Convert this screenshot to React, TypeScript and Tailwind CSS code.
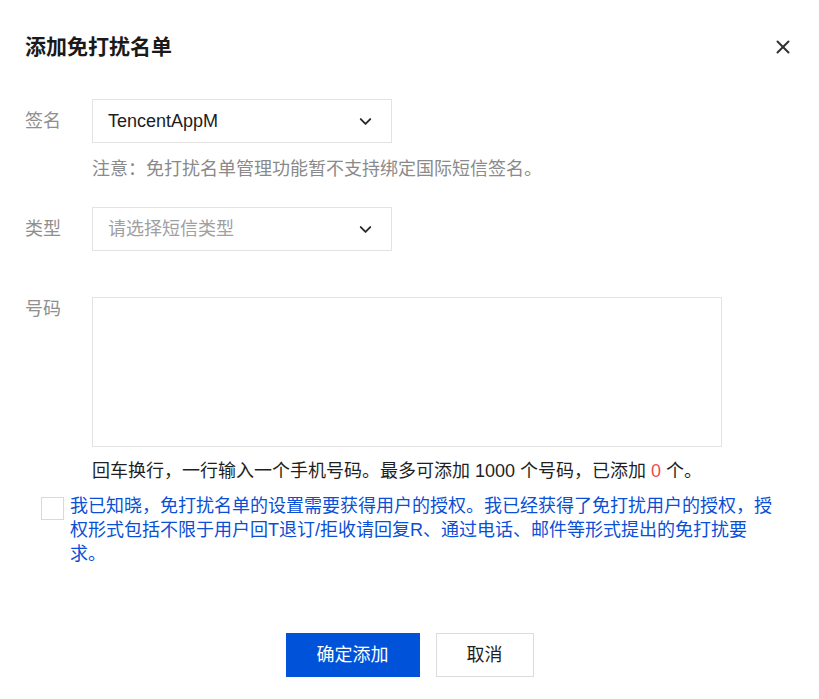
import { X, ChevronDown } from 'lucide-react'

const FONT = '"Liberation Sans", "Noto Sans CJK SC", sans-serif'

function Select({ value, placeholder }: { value?: string; placeholder?: string }) {
  return (
    <div className="w-[300px] h-[44px] border border-[#e3e3e3] flex items-center justify-between pl-[15px] pr-[16px] bg-white">
      {value ? (
        <span className="text-[#1d1d1d]">{value}</span>
      ) : (
        <span className="text-[#a0a0a0]">{placeholder}</span>
      )}
      <ChevronDown className="w-[19px] h-[19px] text-[#2a2a2a]" strokeWidth={2.4} />
    </div>
  )
}

export default function App() {
  return (
    <div
      className="w-[819px] h-[699px] bg-white px-[25px] flex flex-col text-[18px] leading-[24px]"
      style={{ fontFamily: FONT }}
    >
      {/* Header */}
      <div className="pt-[34px] flex items-center justify-between">
        <h1 className="text-[21px] leading-[26px] font-bold text-[#1a1a1a]">添加免打扰名单</h1>
        <X className="w-[22px] h-[22px] text-[#333]" strokeWidth={2.2} />
      </div>

      {/* 签名 */}
      <div className="mt-[39px] flex items-center">
        <span className="w-[67px] text-[#8f8f8f]">签名</span>
        <Select value="TencentAppM" />
      </div>
      <p className="ml-[67px] mt-[14px] text-[#8a8a8a]">注意：免打扰名单管理功能暂不支持绑定国际短信签名。</p>

      {/* 类型 */}
      <div className="mt-[26px] flex items-center">
        <span className="w-[67px] text-[#8f8f8f]">类型</span>
        <Select placeholder="请选择短信类型" />
      </div>

      {/* 号码 */}
      <div className="mt-[46px] flex items-start">
        <span className="w-[67px] text-[#8f8f8f]">号码</span>
        <div className="w-[630px] h-[150px] border border-[#e3e3e3]" />
      </div>
      <p className="ml-[67px] mt-[12px] text-[#1f1f1f]">
        回车换行，一行输入一个手机号码。最多可添加 1000 个号码，已添加 <span className="text-[#f04a52]">0</span> 个。
      </p>

      {/* 授权确认 */}
      <div className="mt-[11px] ml-[16px] flex items-start gap-[6px]">
        <div className="mt-[3px] w-[23px] h-[23px] border border-[#d9d9d9] bg-white shrink-0" />
        <p className="w-[712px] text-[#0a4fd6]">
          我已知晓，免打扰名单的设置需要获得用户的授权。我已经获得了免打扰用户的授权，授权形式包括不限于用户回T退订/拒收请回复R、通过电话、邮件等形式提出的免打扰要求。
        </p>
      </div>

      {/* Footer buttons */}
      <div className="mt-[67px] flex justify-center gap-[16px]">
        <button className="w-[134px] h-[44px] bg-[#0052d9] text-white">确定添加</button>
        <button className="w-[98px] h-[44px] border border-[#dcdcdc] bg-white text-[#1f1f1f]">取消</button>
      </div>
    </div>
  )
}
